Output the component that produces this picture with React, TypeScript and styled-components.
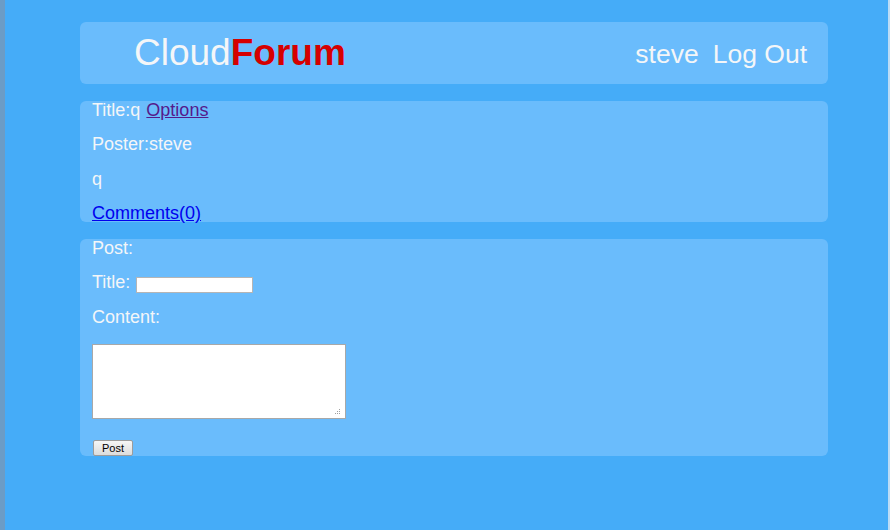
import styled, { createGlobalStyle } from "styled-components";

const GlobalStyle = createGlobalStyle`
  html, body {
    margin: 0;
    padding: 0;
    height: 100%;
  }
  body {
    background: #45acf8;
    font-family: "Liberation Sans", Arial, sans-serif;
  }
`;

const Frame = styled.div`
  box-sizing: border-box;
  width: 890px;
  height: 530px;
  border-left: 5px solid #6b9cc6;
  border-right: 2px solid #bcdcf6;
  padding: 22px 60px 0 75px;
  display: flex;
  flex-direction: column;
  gap: 17px;
`;

const Panel = styled.div`
  background: #6abcfc;
  border-radius: 6px;
  color: #f4f6f8;
`;

const Header = styled(Panel)`
  height: 62px;
  flex-shrink: 0;
  display: flex;
  align-items: center;
  justify-content: space-between;
  padding: 0 21px 0 54px;
`;

const Logo = styled.div`
  font-size: 37px;
  span {
    color: #d60000;
    font-weight: bold;
  }
`;

const UserNav = styled.div`
  display: flex;
  gap: 14px;
  font-size: 26.5px;
  padding-top: 2px;
`;

const Body = styled(Panel)`
  padding: 0 12px;
  display: flex;
  flex-direction: column;
  gap: 16.33px;
  font-size: 18px;
`;

const Line = styled.div`
  height: 18px;
  line-height: 18px;
  display: flex;
  align-items: center;
  gap: 6px;
`;

const Link = styled.a<{ $visited?: boolean }>`
  color: ${(p) => (p.$visited ? "#551a8b" : "#0000ee")};
  text-decoration: underline;
  cursor: pointer;
`;

const TextInput = styled.input`
  box-sizing: border-box;
  width: 117px;
  height: 16px;
  border: 1px solid #b5b5b5;
  background: #fff;
  padding: 0;
  margin: 4px 0 -2px 0;
`;

const Compose = styled.div`
  display: flex;
  flex-direction: column;
  align-items: flex-start;
  padding-top: 1.67px;
`;

const AreaWrap = styled.div`
  position: relative;
  width: 254px;
  height: 75px;
`;

const TextArea = styled.textarea`
  box-sizing: border-box;
  width: 254px;
  height: 75px;
  border: 1px solid #a8a8a8;
  background: #fff;
  margin: 0;
  display: block;
  resize: none;
`;

const Grip = styled.span`
  position: absolute;
  right: 6px;
  bottom: 5px;
  width: 1px;
  height: 1px;
  background: #a0a0a0;
  box-shadow: -2px 0 #a0a0a0, -4px 0 #a0a0a0, 0 -2px #a0a0a0, -2px -2px #a0a0a0,
    0 -4px #a0a0a0;
`;

const Button = styled.button`
  box-sizing: border-box;
  width: 40px;
  height: 16px;
  font-family: "Liberation Sans", Arial, sans-serif;
  font-size: 11px;
  padding: 0;
  color: #000;
  border: 1px solid #9c9c9c;
  border-radius: 2px;
  background: linear-gradient(#f6f6f6, #dcdcdc);
  margin: 21px 0 0 1px;
`;

export default function App() {
  return (
    <>
      <GlobalStyle />
      <Frame>
        <Header>
          <Logo>
            Cloud<span>Forum</span>
          </Logo>
          <UserNav>
            <div>steve</div>
            <div>Log Out</div>
          </UserNav>
        </Header>
        <Body>
          <Line>
            Title:q<Link $visited>Options</Link>
          </Line>
          <Line>Poster:steve</Line>
          <Line>q</Line>
          <Line>
            <Link>Comments(0)</Link>
          </Line>
        </Body>
        <Body>
          <Line>Post:</Line>
          <Line>
            Title:<TextInput type="text" />
          </Line>
          <Line>Content:</Line>
          <Compose>
            <AreaWrap>
              <TextArea />
              <Grip />
            </AreaWrap>
            <Button>Post</Button>
          </Compose>
        </Body>
      </Frame>
    </>
  );
}
